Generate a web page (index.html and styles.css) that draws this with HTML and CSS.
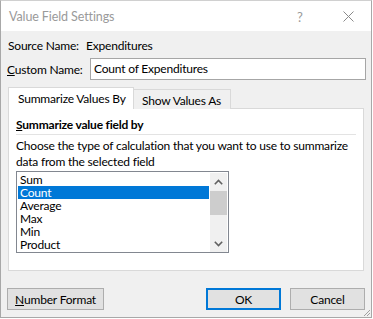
FILE: index.html
```html
<!DOCTYPE html>
<html>
<head>
<meta charset="utf-8">
<link rel="stylesheet" href="styles.css">
</head>
<body>
<div class="dialog">
  <div class="titlebar">
    <span class="title">Value Field Settings</span>
    <span class="help">?</span>
    <span class="close">
      <svg width="11" height="11" viewBox="0 0 11 11"><path d="M0.5 0.5 L10.5 10.5 M10.5 0.5 L0.5 10.5" stroke="#8a8a8a" stroke-width="1" fill="none"/></svg>
    </span>
  </div>
  <div class="body">
    <div class="row source">
      <span class="label">Source Name:</span>
      <span class="value">Expenditures</span>
    </div>
    <div class="row custom">
      <span class="label"><u>C</u>ustom Name:</span>
      <div class="input">Count of Expenditures</div>
    </div>
    <div class="tabs">
      <div class="tab active">Summarize Values By</div>
      <div class="tab">Show Values As</div>
    </div>
    <div class="panel">
      <div class="heading"><u>S</u>ummarize value field by</div>
      <div class="sep"></div>
      <div class="desc">Choose the type of calculation that you want to use to summarize<br>data from the selected field</div>
      <div class="listbox">
        <ul class="items">
          <li>Sum</li>
          <li class="sel">Count</li>
          <li>Average</li>
          <li>Max</li>
          <li>Min</li>
          <li>Product</li>
        </ul>
        <div class="scrollbar">
          <div class="arrow">
            <svg width="9" height="6" viewBox="0 0 9 6"><path d="M0.8 5.2 L4.5 1.5 L8.2 5.2" stroke="#606060" stroke-width="1.6" fill="none"/></svg>
          </div>
          <div class="track"><div class="thumb"></div></div>
          <div class="arrow">
            <svg width="9" height="6" viewBox="0 0 9 6"><path d="M0.8 0.8 L4.5 4.5 L8.2 0.8" stroke="#606060" stroke-width="1.6" fill="none"/></svg>
          </div>
        </div>
      </div>
    </div>
    <div class="buttons">
      <div class="btn numfmt"><u>N</u>umber Format</div>
      <div class="spacer"></div>
      <div class="btn ok">OK</div>
      <div class="btn cancel">Cancel</div>
    </div>
  </div>
  <div class="grip">
    <svg width="10" height="10" viewBox="0 0 10 10"><path d="M9 3 L3 9 M9 6 L6 9" stroke="#a0a0a0" stroke-width="1" fill="none"/></svg>
  </div>
</div>
</body>
</html>
```
FILE: styles.css
```css
* { box-sizing: border-box; }
html, body { margin: 0; padding: 0; background: #ffffff; }
body {
  font-family: "Lato", "Liberation Sans", sans-serif;
  font-size: 12px;
  letter-spacing: -0.2px;
  color: #000;
  white-space: nowrap;
}
.dialog {
  position: relative;
  width: 372px;
  height: 318px;
  border: 1px solid #a8a8a8;
  border-top-color: #d0d0d0;
  background: #f0f0f0;
  display: flex;
  flex-direction: column;
}
.titlebar {
  height: 30px;
  background: #fff;
  display: flex;
  align-items: center;
  padding-left: 8px;
  flex: none;
}
.title {
  color: #9a9a9a;
  font-size: 12.5px;
  letter-spacing: -0.1px;
  flex: 1;
  padding-top: 1px;
}
.help {
  color: #9a9a9a;
  font-size: 13px;
  width: 12px;
  margin-right: 34px;
  padding-top: 1px;
}
.close {
  width: 11px;
  height: 11px;
  margin-right: 17px;
  display: flex;
}
.body {
  flex: 1;
  padding: 6px 6px 0 6px;
  display: flex;
  flex-direction: column;
}
.row {
  display: flex;
  align-items: center;
}
.source { height: 16px; padding-left: 1px; }
.source .label { width: 78px; }
.custom { margin-top: 5px; height: 22px; }
.custom .label { width: 83px; }
.input {
  flex: 1;
  height: 22px;
  margin-right: -1px;
  background: #fff;
  border: 1px solid #a6a6a6;
  padding-left: 3px;
  line-height: 20px;
}
.tabs {
  display: flex;
  align-items: flex-end;
  margin-top: 7px;
  padding-left: 1px;
  position: relative;
  z-index: 1;
  margin-bottom: -1px;
}
.tab {
  height: 20px;
  border: 1px solid #d9d9d9;
  border-bottom: none;
  background: #f0f0f0;
  display: flex;
  align-items: center;
  padding-top: 1px;
}
.tab.active {
  height: 22px;
  background: #fff;
  width: 126px;
  padding-left: 9px;
  padding-top: 0;
}
.tab:not(.active) {
  width: 97px;
  border-left: none;
  padding-left: 8px;
}
.panel {
  margin-left: 1px;
  margin-right: 1px;
  height: 163px;
  background: #fff;
  border: 1px solid #d9d9d9;
  padding: 7px 7px 0 7px;
}
.heading {
  font-weight: bold;
  line-height: 17px;
}
.sep {
  height: 1px;
  background: #e3e3e3;
  margin-top: 1px;
}
.desc {
  line-height: 16px;
  margin-top: 3px;
}
.listbox {
  width: 213px;
  height: 82px;
  margin-top: 1px;
  border: 1px solid #828790;
  display: flex;
  padding: 1px 1px 0 1px;
}
.items {
  list-style: none;
  margin: 0;
  padding: 0;
  flex: 1;
}
.items li {
  height: 13px;
  line-height: 13px;
  padding-left: 2px;
}
.items li.sel {
  background: #0078d7;
  color: #fff;
}
.scrollbar {
  width: 17px;
  height: 79px;
  margin-left: 1px;
  background: #f0f0f0;
  display: flex;
  flex-direction: column;
}
.arrow {
  height: 17px;
  display: flex;
  align-items: center;
  justify-content: center;
}
.track { flex: 1; }
.thumb {
  height: 24px;
  margin-top: 1px;
  background: #cdcdcd;
}
.buttons {
  display: flex;
  margin-top: 17px;
}
.btn {
  height: 22px;
  background: #e1e1e1;
  border: 1px solid #adadad;
  display: flex;
  align-items: center;
  justify-content: center;
}
.numfmt { width: 97px; }
.spacer { flex: 1; }
.ok {
  width: 75px;
  border: 2px solid #0078d7;
}
.cancel {
  width: 75px;
  margin-left: 9px;
}
.grip {
  position: absolute;
  right: 0;
  bottom: 0;
  width: 10px;
  height: 10px;
  display: flex;
}
```
